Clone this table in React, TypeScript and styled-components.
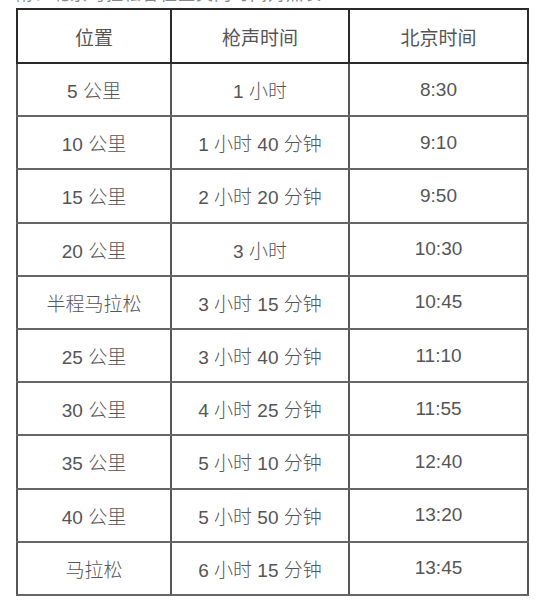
import React from 'react';
import styled, { createGlobalStyle } from 'styled-components';

const GlobalStyle = createGlobalStyle`
    html, body {
        margin: 0;
        padding: 0;
        background: #ffffff;
    }
    body {
        font-family: "Liberation Sans", "Noto Sans CJK SC", sans-serif;
    }
`;

const Page = styled.div`
    width: 551px;
    height: 612px;
    overflow: hidden;
    background: #fff;
`;

const Caption = styled.div`
    height: 4px;
    overflow: hidden;
    padding-left: 16px;
`;

const CaptionText = styled.div`
    margin-top: -14px;
    font-size: 17px;
    line-height: 18px;
    color: #888;
    white-space: nowrap;
    letter-spacing: 1px;
`;

const Table = styled.table`
    margin: 4px 0 0 16px;
    width: 511px;
    border-collapse: collapse;
    table-layout: fixed;
    color: #555;
    font-size: 19px;
`;

const HeadCell = styled.th`
    height: 52px;
    padding: 0;
    font-weight: normal;
    text-align: center;
    border: 2px solid #2a2a2a;
`;

const Cell = styled.td`
    height: 51.2px;
    padding: 0;
    text-align: center;
    font-weight: 300;
    border-left: 2px solid #555;
    border-right: 2px solid #555;
    border-bottom: 2px solid #666;
`;

const rows: [string, string, string][] = [
    ['5 公里', '1 小时', '8:30'],
    ['10 公里', '1 小时 40 分钟', '9:10'],
    ['15 公里', '2 小时 20 分钟', '9:50'],
    ['20 公里', '3 小时', '10:30'],
    ['半程马拉松', '3 小时 15 分钟', '10:45'],
    ['25 公里', '3 小时 40 分钟', '11:10'],
    ['30 公里', '4 小时 25 分钟', '11:55'],
    ['35 公里', '5 小时 10 分钟', '12:40'],
    ['40 公里', '5 小时 50 分钟', '13:20'],
    ['马拉松', '6 小时 15 分钟', '13:45'],
];

export default function App() {
    return (
        <Page>
            <GlobalStyle />
            <Caption>
                <CaptionText>附：北京马拉松各位置关门时间对照表</CaptionText>
            </Caption>
            <Table>
                <colgroup>
                    <col style={{ width: 154 }} />
                    <col style={{ width: 178 }} />
                    <col style={{ width: 179 }} />
                </colgroup>
                <thead>
                    <tr>
                        <HeadCell>位置</HeadCell>
                        <HeadCell>枪声时间</HeadCell>
                        <HeadCell>北京时间</HeadCell>
                    </tr>
                </thead>
                <tbody>
                    {rows.map(([place, gun, time]) => (
                        <tr key={place}>
                            <Cell>{place}</Cell>
                            <Cell>{gun}</Cell>
                            <Cell>{time}</Cell>
                        </tr>
                    ))}
                </tbody>
            </Table>
        </Page>
    );
}
